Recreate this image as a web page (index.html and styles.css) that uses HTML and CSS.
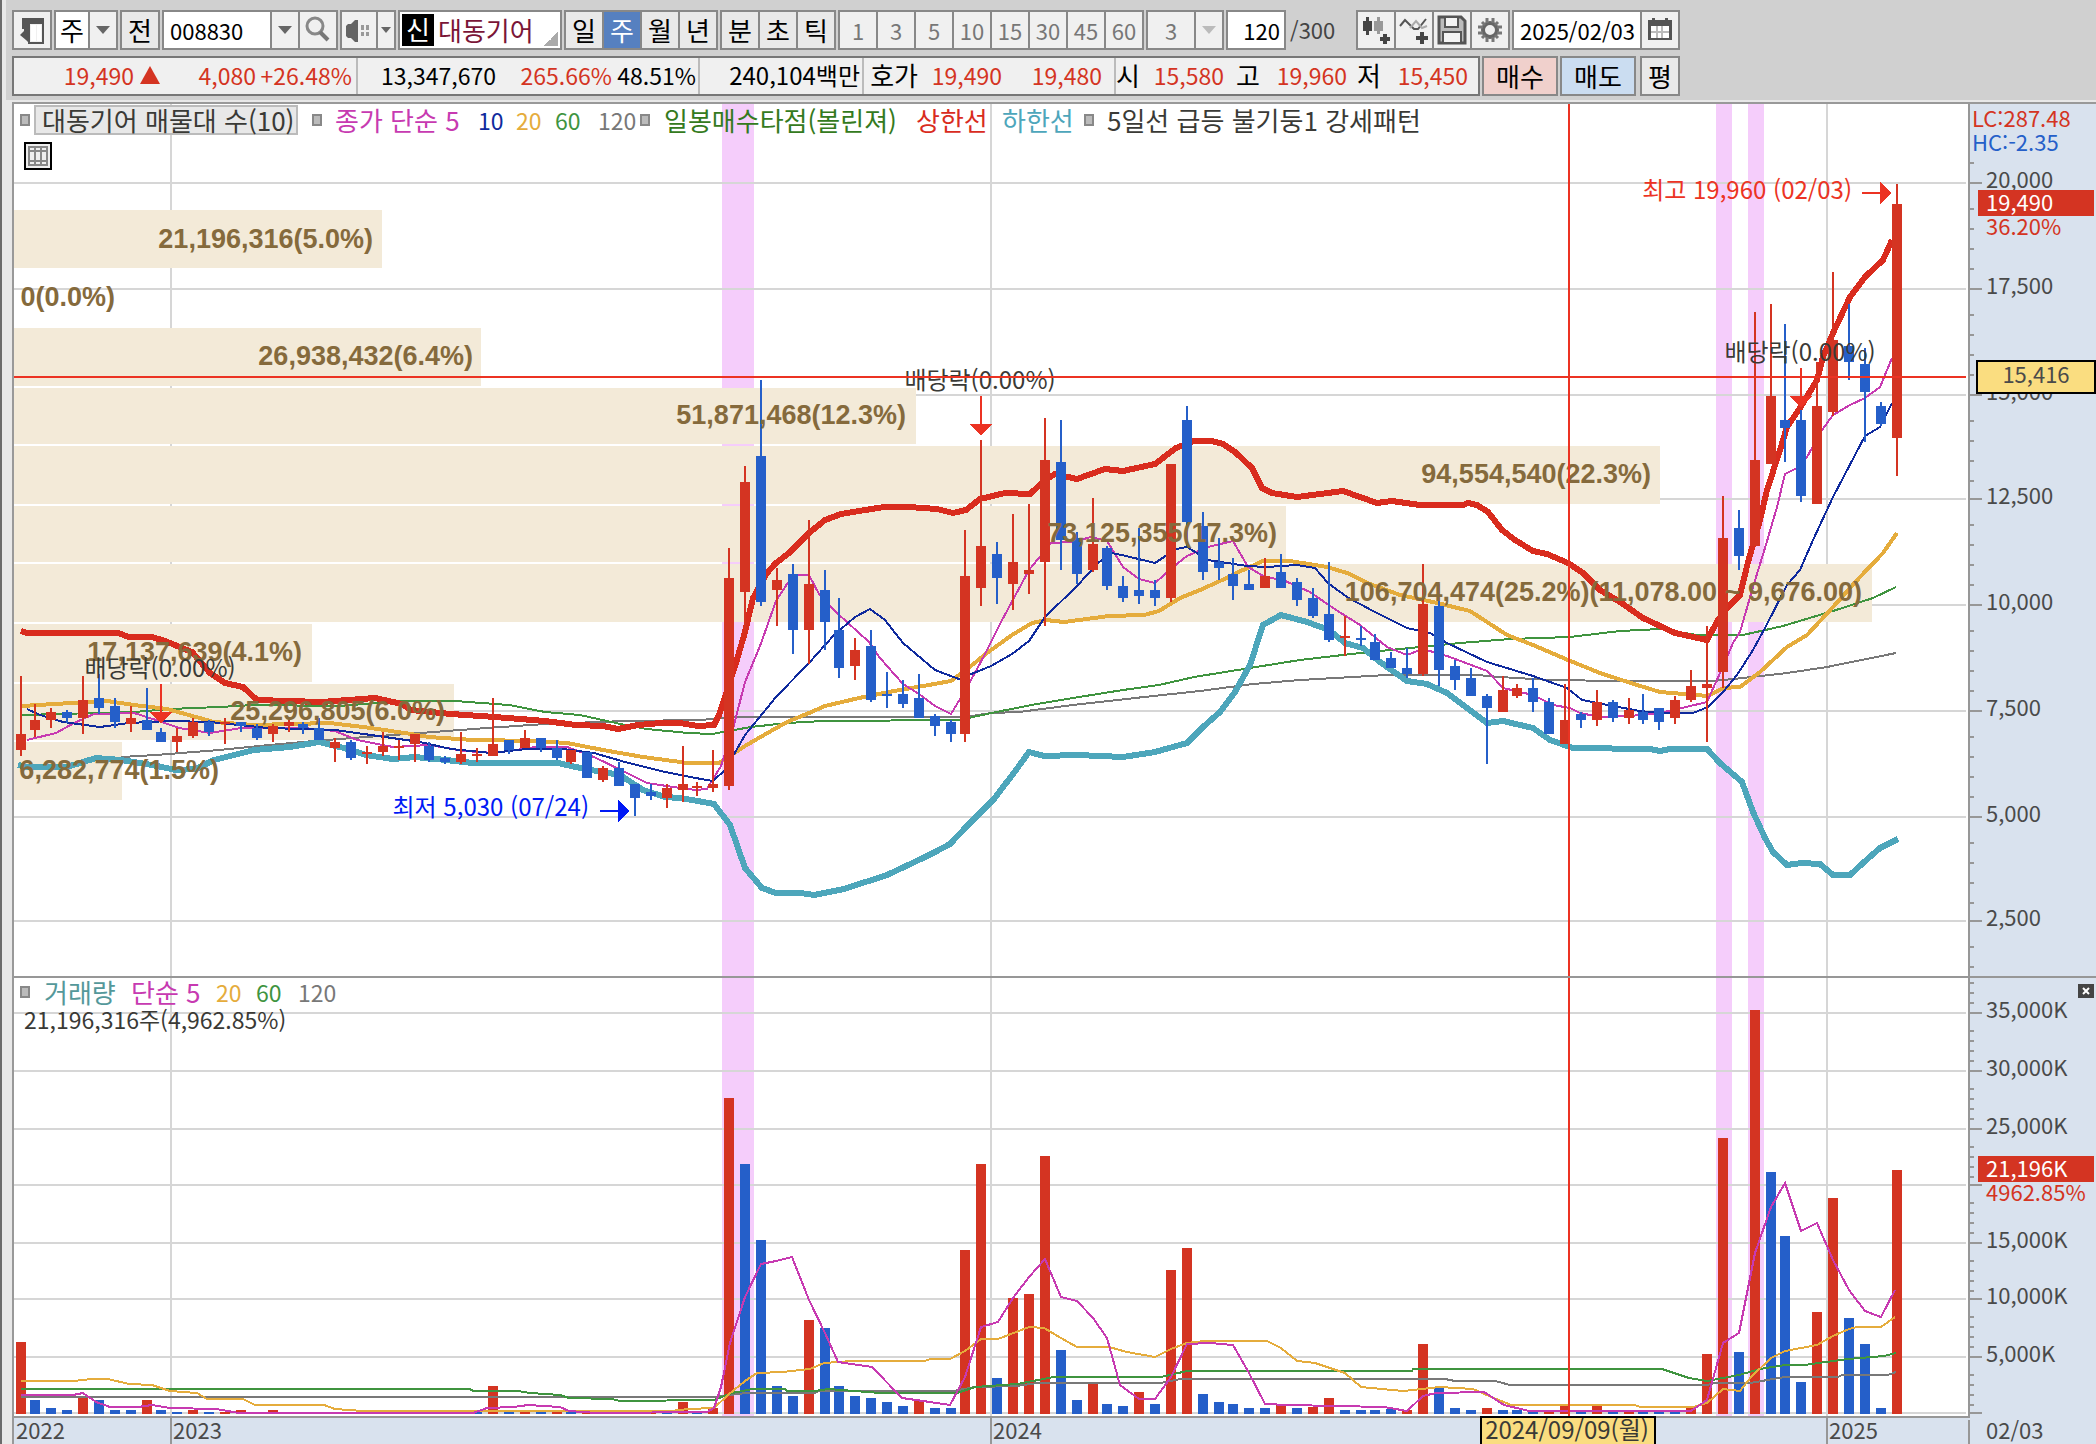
FILE: index.html
```html
<!DOCTYPE html>
<html lang="ko">
<head>
<meta charset="utf-8">
<title>대동기어 주봉 차트</title>
<link rel="stylesheet" href="styles.css">
</head>
<body>
<div class="app">
  <header class="tools">
    <div class="bar">
      <div class="group">
        <button class="cell icon" aria-label="패널"><svg viewBox="0 0 32 32"><path d="M6 4h22v26H12v-2h14V10H14v20l-4-4-6-5 4-4v-2h-2z" fill="#555"/><path d="M15 11h5v16h-5zM21 11h4v16h-4z" fill="#fff"/></svg></button>
      </div>
      <div class="group">
        <label class="pick narrow"><select aria-label="주기"><option>주</option></select></label>
        <span class="cell drop"></span>
      </div>
      <div class="group"><button class="cell">전</button></div>
      <div class="group">
        <input class="field code" aria-label="종목코드" value="008830">
        <button class="cell drop" aria-label="종목 목록"></button>
        <button class="cell icon" aria-label="검색"><svg viewBox="0 0 32 32"><circle cx="13" cy="12" r="8" fill="none" stroke="#888" stroke-width="3"/><path d="M18 18l8 8" stroke="#777" stroke-width="4"/></svg></button>
      </div>
      <div class="group">
        <button class="cell icon sound" aria-label="음성"><svg viewBox="0 0 32 32"><path d="M3 12l2-2h3l4-4h3v22h-3l-4-4H5l-2-2z" fill="#636363"/><path d="M18 11h3v5h-3zM23 11h3v5h-3zM18 18h3v4h-3zM23 18h3v4h-3z" fill="#999"/></svg></button>
        <button class="cell drop slim" aria-label="음성 설정"></button>
      </div>
      <div class="group name"><span class="badge">신</span><span>대동기어</span></div>
      <div class="group">
        <button class="cell">일</button><button class="cell on">주</button><button class="cell">월</button><button class="cell">년</button>
      </div>
      <div class="group"><button class="cell">분</button><button class="cell">초</button><button class="cell">틱</button></div>
      <div class="group off">
        <button class="cell">1</button><button class="cell">3</button><button class="cell">5</button><button class="cell">10</button><button class="cell">15</button><button class="cell">30</button><button class="cell">45</button><button class="cell">60</button>
      </div>
      <div class="group off">
        <label class="pick wide"><select aria-label="분 간격"><option>3</option></select></label>
        <span class="cell drop"></span>
      </div>
      <div class="group"><input class="field count" aria-label="봉 개수" value="120"></div>
      <span class="total">/300</span>
      <div class="group">
        <button class="cell icon" aria-label="종목 추가"><svg viewBox="0 0 32 32"><path d="M3 7h3V3h3v4h3v10H9v4H6v-4H3zM23 20h4v3h3v4h-3v3h-4v-3h-3v-4h3z" fill="#444"/><path d="M14 7h3V3h3v4h3v10h-3v3h-3v-3h-3z" fill="#999"/></svg></button>
        <button class="cell icon" aria-label="지표 추가"><svg viewBox="0 0 32 32"><path d="M2 12l5-6 9 9 4 0 8-10" fill="none" stroke="#555" stroke-width="2"/><path d="M12 14l6-7 6 7 5-2" fill="none" stroke="#aaa" stroke-width="2"/><path d="M22 18h4v4h4v4h-4v4h-4v-4h-4v-4h4z" fill="#444"/></svg></button>
        <button class="cell icon" aria-label="저장"><svg viewBox="0 0 32 32"><path d="M3 3h22l4 4v22H3z" fill="#bbb" stroke="#555" stroke-width="3"/><path d="M9 3h13v10H9zM7 18h18v11H7z" fill="#f4f4f4" stroke="#555" stroke-width="2"/></svg></button>
        <button class="cell icon" aria-label="설정"><svg viewBox="0 0 32 32"><circle cx="16" cy="16" r="7" fill="none" stroke="#666" stroke-width="4"/><path d="M13 4v5M19 4v5M13 23v5M19 23v5M4 13h5M4 19h5M23 13h5M23 19h5M8 8l3 3M24 8l-3 3M8 24l3-3M24 24l-3-3" stroke="#777" stroke-width="3"/></svg></button>
      </div>
      <div class="group">
        <input class="field date" aria-label="조회일" value="2025/02/03">
        <button class="cell icon" aria-label="달력"><svg viewBox="0 0 32 32"><path d="M4 6h4V4h3v2h10V4h3v2h4v20H4z" fill="#555"/><path d="M7 12h18v12H7z" fill="#fff"/><path d="M13 12v12M18 12v12M7 18h18" stroke="#bbb" stroke-width="2"/></svg></button>
      </div>
    </div>
    <div class="bar">
      <div class="quotes">
        <div class="seg last"><span class="num up">19,490</span><svg class="tri" viewBox="0 0 20 18"><path d="M10 0l10 18H0z"/></svg><span class="num up">4,080</span><span class="num up">+26.48%</span></div>
        <div class="seg vol"><span class="num">13,347,670</span><span class="num up">265.66%</span><span class="num">48.51%</span></div>
        <div class="seg amount"><span class="mixed">240,104백만</span></div>
        <div class="seg book"><span>호가</span><span class="num up">19,490</span><span class="num up">19,480</span></div>
        <div class="seg ohl"><span>시</span><span class="num up">15,580</span><span>고</span><span class="num up">19,960</span><span>저</span><span class="num up">15,450</span></div>
      </div>
      <button class="order buy">매수</button>
      <button class="order sell">매도</button>
      <button class="order avg">평</button>
    </div>
  </header>
  <main class="chart">
    <svg id="plot" class="plot" viewBox="14 104 2082 1340" role="img" aria-label="주봉 차트"></svg>
    <div class="legend price">
      <i class="knob"></i><span class="boxed">대동기어 매물대 수(10)</span>
      <i class="knob"></i><span class="m5">종가 단순 5</span><span class="num m10">10</span><span class="num m20">20</span><span class="num m60">60</span><span class="num m120">120</span>
      <i class="knob"></i><span class="buyzone">일봉매수타점(볼린져)</span><span class="upper">상한선</span><span class="lower">하한선</span>
      <i class="knob"></i><span>5일선 급등 불기둥1 강세패턴</span>
    </div>
    <button class="sheet" aria-label="데이터 표"><svg viewBox="0 0 28 28"><path d="M1 1h26v26H1z" fill="#eee" stroke="#000" stroke-width="2"/><path d="M5 5h18v18H5zM5 9h18M5 19h18M11 5v18M17 5v18" fill="none" stroke="#888" stroke-width="2"/></svg></button>
    <div class="legend volume">
      <i class="knob"></i><span class="vol-name">거래량</span><span class="m5">단순 5</span><span class="num m20">20</span><span class="num m60">60</span><span class="num m120">120</span>
    </div>
    <div class="volume-now">21,196,316주(4,962.85%)</div>
    <button class="close" aria-label="닫기"><svg viewBox="0 0 16 14"><path d="M5 4l6 6M11 4l-6 6" stroke="#fff" stroke-width="2"/></svg></button>
  </main>
</div>
<script src="chart.js"></script>
</body>
</html>
```
FILE: styles.css
```css
* { box-sizing: border-box; }
body {
  margin: 0;
  background: #d0d0d0;
  font: 26px/30px "Noto Sans CJK KR", sans-serif;
  color: #000;
}
button, input, select { font: inherit; color: inherit; margin: 0; padding: 0; border: 0; border-radius: 0; }
.app { border-left: 2px solid #6b6b6b; background: #e8e8e8; overflow: hidden; }
.num { font-size: 23px; }
.mixed { font-size: 24px; }

.tools { display: flex; flex-direction: column; gap: 6px; margin-left: 4px; padding: 10px 6px 4px; background: #d0d0d0; }
.bar { display: flex; gap: 2px; height: 40px; white-space: nowrap; }
.group { display: flex; gap: 2px; padding: 2px; background: #888; flex: none; }
.cell { width: 36px; height: 36px; background: #e9e9e9; display: flex; align-items: center; justify-content: center; }
.cell.on { background: #5680c0; color: #fff; }
.cell.icon { background: #f0f0f0; }
.cell.sound { width: 34px; }
.cell svg { width: 32px; height: 32px; flex: none; }
.cell.drop { width: 26px; background: #f0f0f0; }
.cell.slim { width: 16px; }
.drop::before { content: ""; border: 7px solid transparent; border-top: 8px solid #666; border-bottom: 0; }
.cell.slim::before { border-width: 6px 5px 0; }
.pick { background: #fff; height: 36px; }
.pick select { appearance: none; background: none; width: 100%; height: 36px; text-align: center; text-align-last: center; }
.narrow { width: 32px; }
.wide { width: 46px; }
.off { font-size: 22px; }
.off .cell, .off .pick { background: #f0f0f0; color: #777; }
.off .drop::before { border-top-color: #bbb; }
.field { height: 36px; background: #fff; font-size: 22px; }
.code { width: 106px; padding-left: 6px; }
.count { width: 56px; padding-right: 4px; text-align: right; }
.date { width: 126px; padding-left: 6px; }
.total { width: 66px; padding-left: 2px; font-size: 22px; line-height: 38px; color: #444; }
.name { width: 164px; gap: 4px; align-items: center; border: 2px solid #888; background: linear-gradient(135deg, transparent 50%, #aaa 50%) right 2px bottom 2px / 14px 14px no-repeat, #fff; color: #7a1537; line-height: 30px; }
.badge { width: 32px; height: 32px; background: #000; color: #fff; text-align: center; }

.quotes { display: flex; width: 1468px; border: 2px solid #777; background: #f0f0f0; line-height: 28px; }
.seg { display: grid; align-items: center; text-align: right; border-right: 2px solid #bbb; padding-bottom: 2px; }
.seg:last-child { border-right: 0; }
.last { width: 344px; grid-template-columns: 120px 26px 96px 96px; }
.vol { width: 342px; grid-template-columns: 138px 116px 84px; }
.amount { width: 164px; padding-right: 2px; }
.book { width: 252px; grid-template-columns: 54px 84px 100px; }
.ohl { grid-template-columns: 22px 86px 36px 87px 34px 87px; }
.up { color: #d43422; }
.tri { width: 20px; height: 18px; fill: #d43422; justify-self: end; }
.order { width: 76px; border: 2px solid #888; }
.buy { background: #f0d0cc; }
.sell { background: #cbddf1; }
.avg { width: 40px; margin-left: 2px; background: #e9e9e9; }

.chart { position: relative; margin: 2px 0 0 10px; border: solid #999; border-width: 2px 0 0 2px; background: #fff; }
.plot { display: block; width: 100%; height: auto; }
.plot text { font-size: 22px; fill: #4a4a4a; }
.plot .note { font-size: 24px; fill: #3a3a36; }
.plot .band-label { font: bold 27px "Liberation Sans", sans-serif; fill: #856a3c; }
.legend { position: absolute; left: 6px; display: grid; align-items: center; white-space: nowrap; line-height: 28px; }
.price { top: 1px; grid-template-columns: 14px 278px 23px 143px 38px 39px 43px 42px 24px 252px 86px 82px 23px auto; }
.volume { top: 874px; grid-template-columns: 24px 87px 85px 40px 42px auto; }
.knob { width: 10px; height: 12px; background: #bbb; border: 2px solid #888; }
.boxed { width: 264px; padding-left: 6px; background: #e8e8e8; border: 2px solid #bbb; line-height: 26px; color: #3a3a36; }
.price span:last-child { color: #3a3a36; }
.m5 { color: #c73ab1; }
.m10 { color: #0f2a9d; }
.m20 { color: #e5ac3c; }
.m60 { color: #3f943f; }
.m120 { color: #787878; }
.buyzone { color: #347a20; }
.upper { color: #d92c1e; }
.lower { color: #4da6bb; }
.vol-name { color: #54989a; }
.volume-now { position: absolute; left: 10px; top: 900px; font-size: 23px; color: #3a3a36; }
.sheet { position: absolute; left: 10px; top: 38px; width: 28px; height: 28px; background: none; }
.sheet svg, .close svg { display: block; }
.close { position: absolute; right: 2px; top: 880px; width: 16px; height: 14px; background: #444; }
```
FILE: chart.js
```js
const UP = '#d43422', DOWN = '#255fc9', GRID = '#d6d6d6', AXIS = '#979797';
const FIRST = 20, STEP = 15.766, FLOOR = 1414;
const out = [];
const rect = (x, y, w, h, fill, extra = '') =>
  out.push(`<rect x="${x}" y="${y}" width="${w}" height="${h}" fill="${fill}" ${extra}/>`);
const text = (x, y, s, attrs = '') => out.push(`<text x="${x}" y="${y}" ${attrs}>${s}</text>`);
const line = (pts, color, width) =>
  out.push(`<polyline points="${pts}" fill="none" stroke="${color}" stroke-width="${width}"/>`);
// left edge of the two-unit-wide wick of bar i
const barX = i => 2 * Math.floor((FIRST + STEP * i) / 2);

// each bar: colour, high, body top, body bottom, low
const candles = `r676,734,750,756 r704,720,730,737 r708,712,720,728 b710,712,718,723 r676,700,718,734
b674,698,708,714 b698,706,722,728 r706,718,724,732 b688,720,730,730 b728,732,742,742
r728,736,742,752 r718,722,736,738 b720,722,732,736 r718,722,724,744 b722,722,726,732
b724,728,738,740 r724,726,734,742 r720,722,726,732 b722,724,728,734 b718,728,740,740
r738,742,748,762 b740,742,758,760 r746,752,754,764 r732,746,752,756 r740,746,748,760
r734,734,744,762 b742,746,760,762 b756,758,762,764 r732,754,762,764 r748,754,756,762
r698,744,756,756 b740,740,750,754 r730,738,748,748 b738,738,748,752 b740,748,758,760
r750,750,762,764 b752,752,778,778 r766,768,780,782 b762,768,786,786 b784,784,798,816
b784,792,796,800 r784,788,798,808 r746,784,790,802 r782,786,788,796 r750,784,788,792
r548,578,786,790 r466,482,592,632 b380,456,602,606 r568,580,590,626 b564,574,630,654
r520,584,630,664 b570,590,622,650 b598,630,668,678 r638,650,666,680 b630,646,700,702
b672,694,696,708 b680,694,704,708 b674,698,718,718 b714,716,726,736 b720,722,734,742
r530,576,734,742 r440,546,588,606 b542,554,578,604 r514,562,584,610 r504,570,574,594
r418,460,562,626 b420,462,540,570 b532,538,574,584 r498,544,570,572 b546,548,586,590
b576,586,598,602 b528,590,596,604 b580,590,598,606 r464,464,598,602 b406,420,522,546
b512,526,572,580 b538,562,568,580 b558,574,586,600 b570,584,590,590 r558,576,588,588
b554,572,588,588 b578,582,600,606 b588,598,616,618 b562,614,640,642 r616,636,638,656
b626,638,640,646 b634,642,660,660 b652,658,668,668 b648,668,674,678 r564,604,674,676
b584,606,670,686 b660,666,680,690 b668,678,696,696 b694,696,708,764 r676,690,712,712
r684,688,696,698 b678,688,702,712 b698,702,734,734 r684,720,744,744 b712,714,720,728
r690,702,720,726 b700,702,718,722 r698,710,718,724 b694,712,720,724 b708,708,722,730
r696,700,718,724 r670,686,700,702 r626,684,688,742 r496,538,672,688 b510,528,556,570
r312,460,546,546 r304,396,464,464 b324,420,428,462 b410,420,496,502 r362,406,504,504
r272,340,412,416 b304,346,362,380 b348,364,392,442 b402,406,424,426 r184,204,438,476`.split(/\s+/);

// top of each volume bar
const volumes = `r1342 b1400 b1408 b1410 r1397 b1400 b1410 b1410 r1400 b1410 b1412 r1410 b1412 r1412 r1410
r1413 r1410 b1412 b1412 b1413 r1412 b1413 r1413 b1413 r1413 r1412 b1412 b1412 r1412 b1412
r1386 b1412 r1412 b1412 r1412 b1412 r1412 b1413 r1413 b1413 r1413 b1412 r1402 b1412 r1408
r1098 b1164 b1240 b1386 b1396 r1320 b1328 b1386 b1396 b1398 b1402 b1406 r1401 b1408 b1408
r1250 r1164 b1378 r1298 r1294 r1156 b1350 b1400 r1383 b1404 b1406 r1392 b1404 r1270 r1248
b1394 b1402 b1404 b1408 b1408 r1405 b1408 r1407 r1398 b1410 b1410 b1410 b1409 r1410 r1344
b1388 b1408 b1410 r1408 b1410 b1410 b1412 r1412 r1406 b1412 r1406 b1412 r1412 b1412 b1412
b1412 r1408 r1354 r1138 b1352 r1010 b1172 b1236 b1382 r1312 r1198 b1318 b1344 b1408 r1170`.split(/\s+/);

// signal highlights
rect(722, 104, 32, 1312, '#f5cdfb');
rect(1716, 104, 16, 1312, '#f5cdfb');
rect(1748, 104, 16, 1312, '#f5cdfb');

// grid
const priceTicks = [[182, '20,000'], [288, '17,500'], [394, '15,000'], [498, '12,500'], [604, '10,000'], [710, '7,500'], [816, '5,000'], [920, '2,500']];
const volumeTicks = [[1012, '35,000K'], [1070, '30,000K'], [1128, '25,000K'], [1184, ''], [1242, '15,000K'], [1298, '10,000K'], [1356, '5,000K'], [1412, '']];
for (const [y] of [...priceTicks, ...volumeTicks]) rect(14, y, 1952, 2, GRID);
for (const x of [170, 990, 1826]) rect(x, 104, 2, 1312, GRID);

// volume profile
[[210, 58, 382], [328, 58, 481], [388, 56, 916], [446, 58, 1660], [506, 56, 1286], [564, 58, 1872], [624, 58, 312], [684, 56, 454], [742, 58, 122]]
  .forEach(([y, h, x]) => rect(14, y, x - 14, h, '#f3ead8'));

// price averages and bands
line('121,757 156,755 219,750 259,746 313,741 366,737 420,733 487,728 545,724 625,721 701,720 734,717 966,717 991,713 1019,712 1073,705 1144,697 1200,691 1253,684 1300,680 1353,677 1387,675 1477,675 1500,677 1550,680 1620,681 1713,681 1743,678 1787,673 1827,667 1896,653', '#787878', 2);
line('22,715 134,712 170,709 219,707 254,705 339,706 402,701 455,701 509,705 545,712 580,715 625,725 647,729 688,733 712,734 751,727 787,723 823,721 959,720 1001,711 1037,704 1073,698 1123,690 1159,685 1194,677 1250,668 1300,660 1360,653 1410,648 1460,643 1510,639 1570,637 1620,631 1660,629 1697,635 1743,635 1783,626 1833,611 1873,598 1896,587', '#3f943f', 2);
line('22,706 54,704 107,701 134,705 167,709 196,717 214,722 254,725 330,723 371,728 411,734 429,737 473,740 536,741 567,743 603,750 643,757 688,763 719,763 730,756 745,746 764,735 787,722 809,713 825,706 859,698 894,691 923,686 951,681 966,670 987,653 1012,635 1032,623 1046,620 1064,622 1109,616 1144,615 1159,611 1180,598 1200,590 1220,581 1243,570 1263,561 1290,561 1327,567 1347,573 1370,584 1400,595 1433,602 1470,611 1487,622 1507,635 1533,645 1568,660 1600,673 1637,685 1660,692 1708,696 1723,688 1740,687 1760,672 1787,647 1807,635 1833,607 1860,577 1883,553 1897,533', '#e5ac3c', 4);
line('18,765 27,767 67,767 96,758 121,760 152,765 176,770 196,769 214,760 254,750 290,747 319,742 344,748 366,755 393,759 415,757 446,760 473,763 558,763 585,769 620,775 643,790 665,797 680,798 698,801 714,804 730,825 745,868 762,888 776,893 801,893 814,895 844,889 887,875 923,858 935,852 950,844 968,825 994,799 1016,770 1029,752 1044,756 1077,755 1123,757 1155,752 1187,743 1203,727 1220,712 1235,692 1250,665 1263,625 1281,615 1307,622 1329,630 1345,643 1363,648 1380,662 1407,681 1427,684 1447,693 1467,708 1487,723 1503,721 1533,728 1550,740 1573,748 1650,749 1660,751 1670,749 1707,749 1720,763 1742,782 1753,812 1765,838 1773,852 1787,865 1802,863 1820,864 1833,875 1850,875 1863,863 1880,848 1898,839', '#4da6bb', 6);
line('21,631 27,633 118,633 129,637 152,637 165,641 192,652 210,673 225,683 243,687 257,700 321,702 375,698 402,704 411,710 451,714 495,717 545,721 576,725 603,726 618,729 638,725 661,723 680,723 698,726 714,725 719,715 736,663 745,632 753,598 767,573 776,563 789,553 809,533 825,520 841,514 859,511 884,507 909,507 937,509 953,513 966,510 980,499 1005,493 1030,494 1045,480 1055,474 1077,479 1105,469 1123,471 1155,464 1176,448 1194,441 1212,441 1223,444 1235,452 1252,468 1262,488 1272,493 1297,497 1343,491 1377,503 1392,501 1420,505 1463,505 1468,503 1477,505 1488,512 1502,530 1515,540 1533,551 1547,554 1568,563 1583,573 1600,590 1620,602 1643,618 1675,633 1707,640 1718,620 1728,607 1740,595 1748,562 1760,520 1767,490 1780,450 1787,427 1800,408 1817,380 1823,357 1833,333 1850,297 1865,277 1883,260 1892,240', '#d92c1e', 6);
line('27,740 56,733 74,723 94,714 134,713 156,720 179,728 210,733 241,728 304,728 335,731 357,740 393,747 429,745 464,751 495,753 536,747 567,747 594,757 625,772 647,783 680,788 696,790 707,789 721,766 734,725 745,682 760,646 776,601 787,584 798,575 809,575 819,594 837,613 869,642 880,658 903,684 919,694 935,706 951,714 960,699 971,680 984,656 1001,622 1029,570 1051,543 1073,542 1091,537 1107,541 1123,567 1139,579 1155,583 1173,567 1187,556 1208,547 1233,541 1248,567 1265,577 1283,580 1310,592 1333,608 1360,625 1387,647 1407,655 1423,649 1447,656 1487,671 1503,688 1533,695 1553,705 1570,708 1580,713 1600,717 1630,716 1660,713 1682,708 1707,702 1720,673 1733,643 1740,632 1753,587 1765,548 1777,507 1785,474 1797,468 1807,457 1822,430 1833,415 1850,405 1865,398 1880,387 1892,358', '#c73ab1', 2);
line('27,709 40,715 63,722 100,727 129,723 170,721 210,722 268,728 335,730 371,735 420,742 451,749 491,753 527,749 563,749 594,753 625,762 665,772 701,779 713,781 725,770 745,735 776,697 809,663 834,635 855,617 870,609 885,620 903,643 935,670 959,679 991,666 1012,654 1029,641 1045,617 1077,586 1098,563 1112,553 1126,556 1155,563 1176,549 1187,547 1208,560 1247,566 1267,567 1297,565 1315,568 1328,583 1347,597 1373,611 1407,628 1430,633 1447,643 1487,662 1533,676 1567,688 1582,700 1613,706 1640,711 1660,713 1693,713 1708,707 1723,692 1737,675 1753,650 1765,628 1787,585 1800,570 1813,540 1833,497 1865,436 1880,427 1892,403', '#0f2a9d', 2);

candles.forEach((c, i) => {
  const fill = c[0] === 'r' ? UP : DOWN, x = barX(i);
  const [hi, top, bottom, lo] = c.slice(1).split(',').map(Number);
  rect(x, hi, 2, lo - hi, fill);
  rect(x - 4, top, 10, bottom - top, fill);
});
volumes.forEach((v, i) => {
  const top = Number(v.slice(1));
  rect(barX(i) - 4, top, 10, FLOOR - top, v[0] === 'r' ? UP : DOWN);
});

// volume averages
line('21,1397 714,1397 746,1393 815,1393 819,1391 953,1391 975,1387 1017,1386 1037,1383 1161,1383 1180,1379 1445,1379 1455,1381 1495,1381 1510,1385 1707,1385 1715,1383 1750,1383 1785,1377 1838,1377 1842,1375 1888,1375 1896,1372', '#787878', 2);
line('21,1389 470,1389 473,1391 518,1391 530,1393 560,1395 569,1398 612,1399 620,1401 714,1400 732,1393 753,1389 785,1389 787,1391 815,1391 828,1389 881,1393 957,1393 975,1387 1017,1384 1054,1377 1161,1377 1187,1371 1412,1371 1413,1369 1662,1369 1689,1378 1707,1381 1739,1375 1760,1369 1785,1365 1804,1365 1848,1359 1884,1356 1896,1353', '#3f943f', 2);
line('21,1381 73,1381 92,1379 108,1379 129,1384 152,1385 170,1391 197,1393 207,1399 243,1399 255,1405 324,1405 335,1409 363,1411 670,1411 689,1409 714,1408 728,1395 745,1381 757,1373 783,1372 810,1369 824,1363 852,1361 925,1361 930,1359 950,1359 965,1351 981,1339 998,1339 1029,1327 1044,1328 1061,1338 1077,1347 1109,1347 1127,1352 1155,1357 1171,1349 1187,1343 1205,1341 1267,1341 1281,1348 1297,1361 1315,1363 1345,1373 1361,1387 1403,1391 1440,1387 1473,1389 1489,1396 1511,1405 1635,1405 1640,1407 1693,1407 1707,1403 1723,1389 1740,1391 1751,1377 1771,1358 1785,1351 1817,1345 1833,1336 1849,1329 1857,1327 1881,1327 1895,1317', '#e5ac3c', 2);
line('21,1395 73,1395 83,1393 96,1402 110,1407 138,1407 152,1405 170,1408 216,1409 239,1413 473,1413 487,1408 514,1407 528,1405 560,1407 569,1411 597,1413 707,1412 714,1408 721,1387 730,1343 745,1297 761,1264 776,1261 792,1257 809,1300 825,1333 838,1362 872,1367 902,1398 930,1402 950,1405 965,1377 981,1327 998,1322 1013,1298 1029,1277 1045,1259 1061,1297 1077,1301 1093,1318 1107,1338 1120,1385 1139,1399 1155,1399 1171,1377 1187,1344 1210,1343 1233,1345 1249,1373 1265,1404 1288,1405 1384,1407 1407,1411 1423,1396 1436,1393 1484,1392 1504,1405 1529,1411 1691,1411 1707,1400 1723,1343 1739,1333 1755,1253 1771,1207 1785,1183 1801,1231 1817,1223 1833,1260 1849,1290 1865,1311 1881,1317 1895,1290', '#c73ab1', 2);

// volume profile labels
[[373, 248, '21,196,316(5.0%)'], [115, 306, '0(0.0%)'], [473, 365, '26,938,432(6.4%)'], [906, 424, '51,871,468(12.3%)'], [1651, 483, '94,554,540(22.3%)'], [1277, 542, '73,125,355(17.3%)'], [1862, 601, '106,704,474(25.2%)(11,078.00 ~ 9,676.00)'], [302, 661, '17,137,639(4.1%)'], [445, 720, '25,296,805(6.0%)'], [219, 779, '6,282,774(1.5%)']]
  .forEach(([x, y, s]) => text(x, y, s, 'text-anchor="end" class="band-label"'));

// ex-dividend markers
[[161, 684, 712], [981, 396, 424], [1801, 368, 396]].forEach(([x, y1, y2]) => {
  rect(x - 1, y1, 2, y2 - y1, '#ec3323');
  out.push(`<path d="M${x - 11} ${y2}h22l-11 12z" fill="#ec3323"/>`);
});
[[160, 677], [980, 389], [1800, 361]].forEach(([x, y]) => text(x, y, '배당락(0.00%)', 'text-anchor="middle" class="note"'));

// extremes
text(1852, 199, '최고 19,960 (02/03)', 'text-anchor="end" class="note" style="fill:#ec3323"');
out.push('<path d="M1862 192h18v-10l12 11-12 11v-10h-18z" fill="#ec3323"/>');
text(589, 816, '최저 5,030 (07/24)', 'text-anchor="end" class="note" style="fill:#0019f5"');
out.push('<path d="M600 810h18v-10l12 11-12 11v-10h-18z" fill="#0019f5"/>');

// crosshair
rect(14, 376, 1952, 2, '#ec3323');
rect(1568, 104, 2, 1312, '#ec3323');

// value axis
rect(1970, 104, 126, 1340, '#d9e2ee');
rect(14, 1418, 2082, 26, '#d9e2ee');
rect(1968, 104, 2, 1312, AXIS);
rect(1968, 1420, 2, 24, AXIS);
rect(14, 976, 2082, 2, AXIS);
rect(14, 1416, 1956, 2, AXIS);
rect(1970, 162, 4, 2, AXIS);
for (const [y, label] of priceTicks) {
  rect(1970, y, 12, 2, AXIS);
  for (const d of [26, 46, 66, 86]) if (y + d < 976) rect(1970, y + d, 4, 2, AXIS);
  text(1986, y + 6, label);
}
for (const y of [982, 992, 1002]) rect(1970, y, 4, 2, AXIS);
for (const [y, label] of volumeTicks) {
  rect(1970, y, 12, 2, AXIS);
  for (const d of [18, 28, 38, 48]) if (y + d < 1412) rect(1970, y + d, 4, 2, AXIS);
  if (label) text(1986, y + 6, label);
}
text(1972, 127, 'LC:287.48', `style="fill:${UP}"`);
text(1972, 151, 'HC:-2.35', `style="fill:${DOWN}"`);
rect(1978, 190, 116, 26, UP);
text(1986, 211, '19,490', 'style="fill:#fff"');
text(1986, 235, '36.20%', `style="fill:${UP}"`);
rect(1977, 361, 118, 32, '#fadd80', 'stroke="#000" stroke-width="2"');
text(2036, 383, '15,416', 'text-anchor="middle"');
rect(1978, 1156, 116, 26, UP);
text(1986, 1177, '21,196K', 'style="fill:#fff"');
text(1986, 1201, '4962.85%', `style="fill:${UP}"`);

// time axis
for (const x of [170, 990, 1826]) rect(x, 1418, 2, 26, AXIS);
[[16, '2022'], [173, '2023'], [993, '2024'], [1829, '2025'], [1986, '02/03']].forEach(([x, s]) => text(x, 1439, s));
rect(1481, 1417, 174, 32, '#fadd80', 'stroke="#000" stroke-width="2"');
text(1567, 1439, '2024/09/09(월)', 'text-anchor="middle" class="note"');

document.getElementById('plot').innerHTML = `<g shape-rendering="crispEdges">${out.join('')}</g>`;
```
